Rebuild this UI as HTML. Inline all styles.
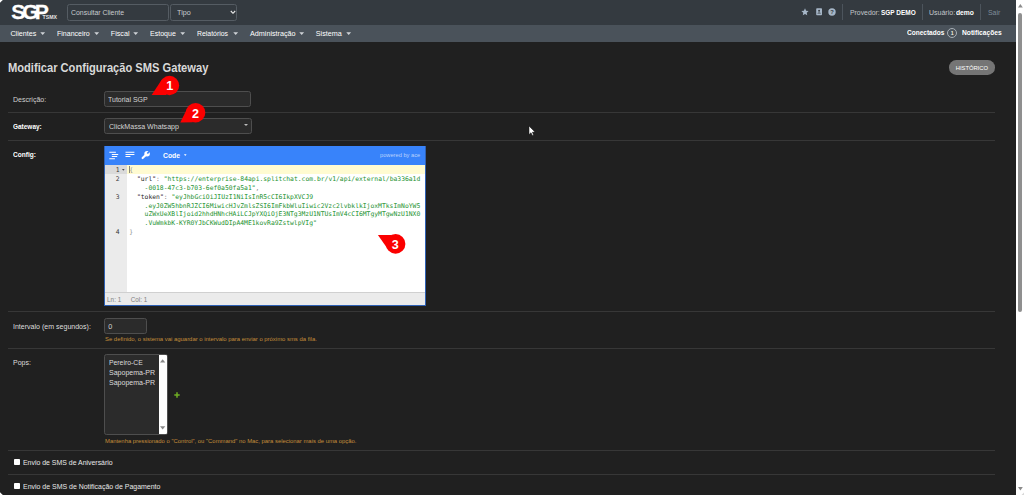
<!DOCTYPE html>
<html lang="pt-BR">
<head>
<meta charset="utf-8">
<title>Modificar Configuração SMS Gateway</title>
<style>
html,body{margin:0;padding:0;}
body{width:1024px;height:495px;overflow:hidden;background:#202020;position:relative;
  font-family:"Liberation Sans",sans-serif;color:#d8d8d8;font-size:7px;}
.abs{position:absolute;white-space:nowrap;line-height:1;}
.t{position:absolute;white-space:nowrap;line-height:10px;font-family:"Liberation Sans",sans-serif;transform-origin:0 50%;}
#topbar{position:absolute;left:0;top:0;width:1016px;height:25px;background:#343a40;}
#navbar{position:absolute;left:0;top:25px;width:1016px;height:16.6px;background:#4a525a;}
.caret{position:absolute;top:32.3px;width:0;height:0;border-left:2.5px solid transparent;border-right:2.5px solid transparent;border-top:2.6px solid #d9dcdf;}
.inp{position:absolute;box-sizing:border-box;border:1px solid #4e4e4e;border-radius:2.500px;background:#2b2b2b;}
.hr{position:absolute;left:8px;width:986.5px;height:1px;background:#373737;}
.sep{position:absolute;top:4.4px;width:1px;height:15.6px;background:#4c545c;}
/* editor */
#ed{position:absolute;left:104.3px;top:145.8px;width:321.4px;height:160.4px;background:#fff;}
#ed:after{content:"";position:absolute;left:0;top:0;right:0;bottom:0;border:1px solid #2e61b5;border-top:0;pointer-events:none;}
#edmenu{position:absolute;left:0;top:0;width:321.4px;height:19px;background:#3883fa;}
#gut{position:absolute;left:0.500px;top:19px;width:22.1px;height:127.4px;background:#ebebeb;}
#gut1{position:absolute;left:0.500px;top:19px;width:22.1px;height:9px;background:#dadada;}
#act{position:absolute;left:22.6px;top:19px;width:298.3px;height:9px;background:#fffbd1;}
.ln{position:absolute;left:0;width:15.400px;text-align:right;font-family:"DejaVu Sans Mono","Liberation Mono",monospace;font-size:6.360px;line-height:8.89px;color:#3a3a3a;}
.cl{position:absolute;left:24.95px;font-family:"DejaVu Sans Mono","Liberation Mono",monospace;font-size:6.360px;line-height:8.89px;white-space:pre;color:#333;}
.s{color:#1c9230;}
.k{color:#262626;}
.p{color:#8c8c8c;}
#stat{position:absolute;left:0.500px;top:146.400px;width:320.400px;height:13.500px;background:#ebebeb;border-top:1px solid #d0d0d0;box-sizing:border-box;}
</style>
</head>
<body>
<div id="topbar"></div>
<div id="navbar"></div>

<!-- logo -->
<svg class="abs" style="left:0;top:0" width="64" height="25" viewBox="0 0 64 25">
  <text transform="scale(1.08,1)" x="10.5" dx="0 -2.94 -3.69" y="19" font-family="Liberation Sans, sans-serif" font-weight="bold" font-size="19.6" fill="#fff" stroke="#fff" stroke-width="0.250">SGP</text>
  <text x="42.6" y="18.8" font-family="Liberation Sans, sans-serif" font-weight="bold" font-size="4.9" fill="#e4e4e4" textLength="14.4" lengthAdjust="spacingAndGlyphs">TSMX</text>
</svg>

<div class="inp" style="left:67.3px;top:3.6px;width:101.4px;height:17.2px;background:#343a40;border-color:#555c63;"></div>
<div class="inp" style="left:170.2px;top:3.6px;width:67.2px;height:17.2px;background:#343a40;border-color:#555c63;"></div>
<svg class="abs" style="left:229.5px;top:10.3px" width="6" height="5" viewBox="0 0 6 5"><path d="M0.8 1 L3 3.3 L5.2 1" stroke="#ececec" stroke-width="1.1" fill="none"/></svg>

<svg class="abs" style="left:39.9px;top:32px" width="6" height="4" viewBox="0 0 6 4"><path d="M0.300 0.300H5.100L2.700 2.900Z" fill="#cfd3d7"/></svg>
<svg class="abs" style="left:93.5px;top:32px" width="6" height="4" viewBox="0 0 6 4"><path d="M0.300 0.300H5.100L2.700 2.900Z" fill="#cfd3d7"/></svg>
<svg class="abs" style="left:132.9px;top:32px" width="6" height="4" viewBox="0 0 6 4"><path d="M0.300 0.300H5.100L2.700 2.900Z" fill="#cfd3d7"/></svg>
<svg class="abs" style="left:180.1px;top:32px" width="6" height="4" viewBox="0 0 6 4"><path d="M0.300 0.300H5.100L2.700 2.900Z" fill="#cfd3d7"/></svg>
<svg class="abs" style="left:232.8px;top:32px" width="6" height="4" viewBox="0 0 6 4"><path d="M0.300 0.300H5.100L2.700 2.900Z" fill="#cfd3d7"/></svg>
<svg class="abs" style="left:299px;top:32px" width="6" height="4" viewBox="0 0 6 4"><path d="M0.300 0.300H5.100L2.700 2.900Z" fill="#cfd3d7"/></svg>
<svg class="abs" style="left:345.8px;top:32px" width="6" height="4" viewBox="0 0 6 4"><path d="M0.300 0.300H5.100L2.700 2.900Z" fill="#cfd3d7"/></svg>

<!-- top right icons -->
<svg class="abs" style="left:801px;top:8.2px" width="8" height="8" viewBox="0 0 24 24"><path fill="#a6b6c7" d="M12 1l3.3 7 7.500.9-5.600 5.200 1.500 7.600L12 18l-6.700 3.700 1.500-7.600L1.200 8.900l7.500-.9z"/></svg>
<svg class="abs" style="left:815.5px;top:8.4px" width="6.200" height="7.400" viewBox="0 0 6.200 7.400"><rect x="0.2" y="0.2" width="5.800" height="7" rx="0.8" fill="#a6b6c7"/><circle cx="3.100" cy="2.800" r="1" fill="#343a40"/><path d="M1.400 5.600c0-1.300 3.400-1.300 3.400 0z" fill="#343a40"/></svg>
<svg class="abs" style="left:828px;top:8.200px" width="8" height="8" viewBox="0 0 8 8"><circle cx="4" cy="4" r="3.700" fill="#a6b6c7"/><text x="4" y="6.100" font-size="5.800" font-weight="bold" text-anchor="middle" font-family="Liberation Sans, sans-serif" fill="#343a40">?</text></svg>
<div class="sep" style="left:842px"></div>
<div class="sep" style="left:921.5px"></div>
<div class="sep" style="left:980.3px"></div>

<div class="abs" style="left:947px;top:28.2px;width:10.2px;height:10.2px;border:0.800px solid #a9b0b7;border-radius:50%;box-sizing:border-box;"></div>
<div class="abs" style="left:947px;top:30.600px;width:10.2px;text-align:center;font-size:5.200px;font-weight:bold;color:#f3efe0;">1</div>

<!-- historico pill -->
<div class="abs" style="left:949px;top:60.100px;width:46px;height:14.600px;border-radius:7.300px;background:#757575;"></div>

<!-- Descrição -->
<div class="inp" style="left:104.3px;top:91.2px;width:146.400px;height:15.500px;"></div>
<div class="hr" style="top:112.2px"></div>

<!-- Gateway -->
<div class="inp" style="left:104.3px;top:118px;width:147.400px;height:16px;"></div>
<div class="abs" style="left:243.700px;top:123.900px;width:0;height:0;border-left:2px solid transparent;border-right:2px solid transparent;border-top:2.600px solid #bdbdbd;"></div>
<div class="hr" style="top:139.700px"></div>

<!-- Config -->
<div id="ed">
  <div id="edmenu"></div>
  <svg class="abs" style="left:0;top:0" width="90" height="19" viewBox="0 0 90 19">
    <g stroke="#fff" stroke-width="1.05" fill="none">
      <path d="M5.3 6.3H11.9 M7.8 8.45H14.2 M7.8 10.55H13.2 M5.3 12.7H10.9"/>
      <path d="M21.5 6.3H30.4 M21.5 8.45H30.4 M21.5 10.55H26.4"/>
    </g>
    <path d="M38.60 12.10L42.30 8.40" stroke="#fff" stroke-width="2.1" stroke-linecap="round" fill="none"/><circle cx="43.10" cy="7.70" r="2.750" fill="#fff"/><path d="M43.30 7.50L46.90 3.90" stroke="#3883fa" stroke-width="1.700" fill="none"/>
    <path d="M79.9 8.3H82.6L81.25 10.0Z" fill="#fff"/>
  </svg>
  <div id="gut"></div><div id="gut1"></div><div id="act"></div>
  <div class="abs" style="left:24.9px;top:19.8px;width:0.6px;height:7.6px;background:#8a8a7a"></div>
  <div class="ln" style="top:20.20px">1</div>
  <div class="ln" style="top:29.10px">2</div>
  <div class="ln" style="top:46.90px">3</div>
  <div class="ln" style="top:82.50px">4</div>
  <svg class="abs" style="left:17.8px;top:22.9px" width="3" height="2" viewBox="0 0 3 2"><path d="M0 0H2.600L1.300 1.700Z" fill="#4d4d4d"/></svg>
  <div class="cl" style="top:20.20px"><span class="p">{</span></div>
  <div class="cl" style="top:29.10px">  <span class="k">"url"</span><span class="p">:</span> <span class="s">"https://enterprise-84api.splitchat.com.br/v1/api/external/ba336a1d</span></div>
  <div class="cl" style="top:38.00px"><span class="s">    -0018-47c3-b703-6ef0a50fa5a1"</span><span class="p">,</span></div>
  <div class="cl" style="top:46.90px">  <span class="k">"token"</span><span class="p">:</span> <span class="s">"eyJhbGciOiJIUzI1NiIsInR5cCI6IkpXVCJ9</span></div>
  <div class="cl" style="top:55.80px"><span class="s">    .eyJ0ZW5hbnRJZCI6MiwicHJvZmlsZSI6ImFkbWluIiwic2Vzc2lvbklkIjoxMTksImNoYW5</span></div>
  <div class="cl" style="top:64.70px"><span class="s">    uZWxUeXBlIjoid2hhdHNhcHAiLCJpYXQiOjE3NTg3MzU1NTUsImV4cCI6MTgyMTgwNzU1NX0</span></div>
  <div class="cl" style="top:73.60px"><span class="s">    .VuWmkbK-KYR0YJbCKWudDIpA4ME1kovRa9ZstwlpVIg"</span></div>
  <div class="cl" style="top:82.50px"><span class="p">}</span></div>
  <div id="stat"></div>
</div>
<div class="hr" style="top:311px"></div>

<!-- Intervalo -->
<div class="inp" style="left:104.3px;top:317.700px;width:42.600px;height:15.900px;"></div>
<div class="hr" style="top:348.200px"></div>

<!-- Pops -->
<div class="inp" style="left:104px;top:354px;width:64px;height:81px;"></div>
<div class="abs" style="left:159px;top:355px;width:8px;height:79px;background:#fff;border-radius:0 1px 1px 0;"></div>
<svg class="abs" style="left:160.400px;top:359px" width="6" height="4" viewBox="0 0 6 4"><path d="M0 3.500H5.300L2.650 0.200Z" fill="#8a8a8a"/></svg>
<svg class="abs" style="left:160.400px;top:426.300px" width="6" height="4" viewBox="0 0 6 4"><path d="M0 0.200H5.300L2.650 3.500Z" fill="#8a8a8a"/></svg>
<svg class="abs" style="left:173.600px;top:392.100px" width="6" height="6" viewBox="0 0 6 6"><path d="M3 0.300V5.700M0.300 3H5.700" stroke="#6fae23" stroke-width="1.500" fill="none"/></svg>
<div class="hr" style="top:450px"></div>

<!-- checkboxes -->
<div class="abs" style="left:13.700px;top:458.600px;width:6.600px;height:6.600px;background:#fff;border-radius:0.800px;"></div>
<div class="hr" style="top:474px"></div>
<div class="abs" style="left:13.700px;top:482.900px;width:6.600px;height:6.600px;background:#fff;border-radius:0.800px;"></div>

<div class="t" style="left:71.28px;top:7px;line-height:11px;font-size:7.4px;color:#c8ccd0;transform:scaleX(0.9355);">Consultar Cliente</div>
<div class="t" style="left:176.68px;top:7px;line-height:11px;font-size:7.4px;color:#c8ccd0;transform:scaleX(0.9741);">Tipo</div>
<div class="t" style="left:10.38px;top:28px;line-height:11px;font-size:7.2px;color:#ffffff;">Clientes</div>
<div class="t" style="left:56.88px;top:28px;line-height:11px;font-size:7.2px;color:#ffffff;transform:scaleX(0.9753);">Financeiro</div>
<div class="t" style="left:110.78px;top:28px;line-height:11px;font-size:7.2px;color:#ffffff;">Fiscal</div>
<div class="t" style="left:150.38px;top:28px;line-height:11px;font-size:7.2px;color:#ffffff;transform:scaleX(0.9794);">Estoque</div>
<div class="t" style="left:197.28px;top:28px;line-height:11px;font-size:7.2px;color:#ffffff;transform:scaleX(0.9590);">Relatórios</div>
<div class="t" style="left:250.03px;top:28px;line-height:11px;font-size:7.2px;color:#ffffff;">Administração</div>
<div class="t" style="left:315.78px;top:28px;line-height:11px;font-size:7.2px;color:#ffffff;">Sistema</div>
<div class="t" style="left:849.53px;top:7px;line-height:11px;font-size:7.2px;color:#c3c7cb;transform:scaleX(0.9522);">Provedor:</div>
<div class="t" style="left:880.79px;top:8px;line-height:9px;font-size:7.0px;font-weight:bold;color:#ffffff;transform:scaleX(0.9232);">SGP DEMO</div>
<div class="t" style="left:928.88px;top:7px;line-height:11px;font-size:7.2px;color:#c3c7cb;transform:scaleX(0.9745);">Usuário:</div>
<div class="t" style="left:956.39px;top:8px;line-height:9px;font-size:7.0px;font-weight:bold;color:#ffffff;transform:scaleX(0.9597);">demo</div>
<div class="t" style="left:987.68px;top:7px;line-height:11px;font-size:7.2px;color:#7f8d9b;transform:scaleX(0.9598);">Sair</div>
<div class="t" style="left:906.79px;top:28px;line-height:9px;font-size:7.0px;font-weight:bold;color:#ffffff;transform:scaleX(0.9315);">Conectados</div>
<div class="t" style="left:961.79px;top:28px;line-height:9px;font-size:7.0px;font-weight:bold;color:#ffffff;transform:scaleX(0.9530);">Notificações</div>
<div class="t" style="left:8.03px;top:60px;line-height:16px;font-size:12.2px;font-weight:bold;color:#d9d9d9;transform:scaleX(0.9130);">Modificar Configuração SMS Gateway</div>
<div class="t" style="left:955.73px;top:64px;line-height:8px;font-size:5.8px;color:#ffffff;">HISTÓRICO</div>
<div class="t" style="left:13.28px;top:94px;line-height:11px;font-size:7.2px;color:#d0d0d0;transform:scaleX(0.9788);">Descrição:</div>
<div class="t" style="left:13.28px;top:121px;line-height:11px;font-size:7.2px;font-weight:bold;color:#ffffff;transform:scaleX(0.8988);">Gateway:</div>
<div class="t" style="left:13.28px;top:149px;line-height:11px;font-size:7.2px;font-weight:bold;color:#ffffff;transform:scaleX(0.9116);">Config:</div>
<div class="t" style="left:13.37px;top:321px;line-height:11px;font-size:7.8px;color:#dedede;transform:scaleX(0.9028);">Intervalo (em segundos):</div>
<div class="t" style="left:13.37px;top:357px;line-height:11px;font-size:7.8px;color:#dedede;transform:scaleX(0.8955);">Pops:</div>
<div class="t" style="left:22.67px;top:457px;line-height:11px;font-size:7.6px;color:#e8e8e8;transform:scaleX(0.9115);">Envio de SMS de Aniversário</div>
<div class="t" style="left:22.67px;top:481px;line-height:11px;font-size:7.6px;color:#e8e8e8;transform:scaleX(0.9166);">Envio de SMS de Notificação de Pagamento</div>
<div class="t" style="left:108.03px;top:94px;line-height:11px;font-size:7.3px;color:#d4d4d4;transform:scaleX(0.9563);">Tutorial SGP</div>
<div class="t" style="left:109.03px;top:121px;line-height:11px;font-size:7.3px;color:#d4d4d4;transform:scaleX(0.9688);">ClickMassa Whatsapp</div>
<div class="t" style="left:108.18px;top:321px;line-height:11px;font-size:7.3px;color:#d4d4d4;">0</div>
<div class="t" style="left:109.38px;top:357px;line-height:11px;font-size:7.4px;color:#dcdcdc;transform:scaleX(0.9229);">Pereiro-CE</div>
<div class="t" style="left:109.38px;top:367px;line-height:11px;font-size:7.4px;color:#dcdcdc;transform:scaleX(0.9517);">Sapopema-PR</div>
<div class="t" style="left:109.38px;top:377px;line-height:11px;font-size:7.4px;color:#dcdcdc;transform:scaleX(0.9517);">Sapopema-PR</div>
<div class="t" style="left:104.52px;top:335px;line-height:8px;font-size:6.0px;color:#c48e3a;transform:scaleX(0.9849);">Se definido, o sistema vai aguardar o intervalo para enviar o próximo sms da fila.</div>
<div class="t" style="left:104.52px;top:437px;line-height:8px;font-size:6.0px;color:#c48e3a;transform:scaleX(0.9810);">Mantenha pressionado o &quot;Control&quot;, ou &quot;Command&quot; no Mac, para selecionar mais de uma opção.</div>
<div class="t" style="left:163.18px;top:150px;line-height:11px;font-size:7.4px;font-weight:bold;color:#ffffff;transform:scaleX(0.9221);">Code</div>
<div class="t" style="left:379.83px;top:151px;line-height:8px;font-size:5.8px;color:#bad2fd;transform:scaleX(0.9807);">powered by ace</div>
<div class="t" style="left:107.01px;top:295px;line-height:9px;font-size:6.3px;color:#808080;letter-spacing:0.072px;">Ln: 1</div>
<div class="t" style="left:130.71px;top:295px;line-height:9px;font-size:6.3px;color:#808080;">Col: 1</div>


<!-- markers -->
<svg class="abs" style="left:0;top:0" width="1016" height="495" viewBox="0 0 1016 495">
  <g fill="#fb0000">
    <circle cx="169.500" cy="85.500" r="9.650"/><path d="M151.650 94.900L162.400 78.800L166.500 94.900Z"/>
    <circle cx="195.600" cy="112.700" r="9.700"/><path d="M180.300 122.600L187.300 108.300L192.700 122.300Z"/>
    <circle cx="395.600" cy="243.900" r="9.800"/><path d="M377.900 235.100L391.800 234.900L386.700 247.500Z"/>
  </g>
  <g fill="#fff" font-family="Liberation Sans, sans-serif" font-weight="bold" font-size="12.600" text-anchor="middle">
    <text x="169.700" y="90">1</text><text x="195.500" y="118">2</text><text x="395.300" y="249">3</text>
  </g>
</svg>

<!-- mouse pointer -->
<svg class="abs" style="left:527.900px;top:124.700px" width="9" height="12" viewBox="0 0 9 12"><path d="M1 1V9.600L3 7.700L4.300 10.400L5.600 9.900L4.400 7.200L7 7Z" fill="#fff" stroke="#111" stroke-width="0.500" stroke-linejoin="round"/></svg>

<!-- page scrollbar -->
<div class="abs" style="left:1016px;top:0;width:8px;height:495px;background:#fff;"></div>
<div class="abs" style="left:1018px;top:12.500px;width:4.200px;height:299px;background:#8f8f8f;border-radius:2.100px;"></div>
<svg class="abs" style="left:1017.600px;top:4.300px" width="5" height="4" viewBox="0 0 5 4"><path d="M0 3.500H4.800L2.400 0Z" fill="#8b8b8b"/></svg>
<svg class="abs" style="left:1017.600px;top:487.200px" width="5" height="4" viewBox="0 0 5 4"><path d="M0 0H4.800L2.400 3.500Z" fill="#8b8b8b"/></svg>
<!-- window corners -->
<svg class="abs" style="left:1020px;top:491px" width="4" height="4" viewBox="0 0 4 4"><path d="M4 1.500V4H1.500Z" fill="#d8d8d8"/></svg>
<svg class="abs" style="left:0;top:0" width="4" height="4" viewBox="0 0 4 4"><path d="M0 0H2.800L0 2.800Z" fill="#fff"/></svg>
<svg class="abs" style="left:0;top:491px" width="4" height="4" viewBox="0 0 4 4"><path d="M0 4H2.800L0 1.200Z" fill="#fff"/></svg>
</body>
</html>
